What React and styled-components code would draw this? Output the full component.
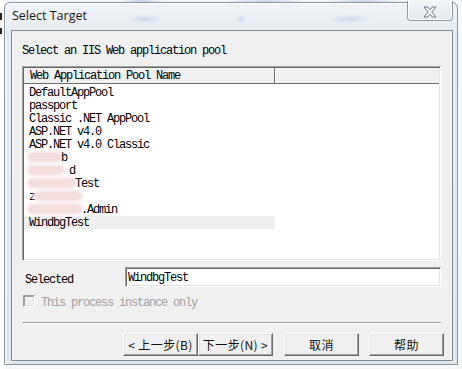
import React from 'react';
import styled, { createGlobalStyle } from 'styled-components';

const Global = createGlobalStyle`
  html, body { margin: 0; padding: 0; background: #fbfbfb; }
  body { width: 462px; height: 369px; overflow: hidden; }
  * { box-sizing: border-box; }
`;

const Page = styled.div`
  display: flex;
  width: 462px;
  height: 369px;
  padding-top: 2px;
  background:
    radial-gradient(ellipse 22px 3px at 142px 1px, rgba(90, 130, 210, 0.35), transparent),
    radial-gradient(ellipse 40px 3px at 265px 1px, rgba(90, 130, 210, 0.3), transparent),
    radial-gradient(ellipse 40px 3px at 365px 1px, rgba(90, 130, 210, 0.3), transparent),
    #f6f7f8;
`;

const LeftStrip = styled.div`
  width: 4px;
  flex: none;
  margin-top: -2px;
  background:
    linear-gradient(#222, #222) 0 13px / 2px 7px no-repeat,
    linear-gradient(#222, #222) 0 28px / 2px 6px no-repeat,
    #fff;
`;

const Window = styled.div`
  width: 454px;
  height: 363px;
  flex: none;
  display: flex;
  flex-direction: column;
  border: 1px solid #8a949e;
  border-radius: 6px 6px 0 0;
  background:
    radial-gradient(ellipse 18px 4px at 140px 16px, rgba(110, 150, 220, 0.28), transparent),
    radial-gradient(ellipse 6px 4px at 236px 16px, rgba(110, 150, 220, 0.22), transparent),
    radial-gradient(ellipse 22px 4px at 345px 16px, rgba(110, 150, 220, 0.25), transparent),
    linear-gradient(#f1f4f7, #e6ebf0 30px, #e3e8ed);
  box-shadow: inset 1px 1px 0 rgba(255, 255, 255, 0.8);
`;

const TitleBar = styled.div`
  height: 27px;
  flex: none;
  display: flex;
  align-items: flex-start;
  padding-left: 7px;
  padding-right: 4px;
`;

const TitleText = styled.div`
  font-family: "Open Sans", "Liberation Sans", sans-serif;
  font-size: 12.5px;
  line-height: 16px;
  padding-top: 5px;
  color: #1a1a1a;
`;

const CloseButton = styled.div`
  margin-left: auto;
  margin-top: -2px;
  width: 46px;
  height: 20px;
  border: 1px solid #8f99a3;
  border-top: none;
  border-radius: 0 0 4px 4px;
  background: linear-gradient(#f2f5f8, #e4e9ee);
  box-shadow: inset 1px 0 0 #fff, inset -1px -1px 0 #fff;
  display: flex;
  align-items: center;
  justify-content: center;
  padding-top: 2px;
`;

const Client = styled.div`
  margin: 0 4px 3px 6px;
  height: 331px;
  border: 1px solid #838c95;
  background: #f0f0f0;
  padding: 0 11px 0 10px;
  display: flex;
  flex-direction: column;
  font-family: "Liberation Mono", monospace;
  font-size: 12px;
  letter-spacing: -1.2px;
  color: #000;
`;

const Heading = styled.div`
  margin-top: 14px;
  height: 13px;
  line-height: 13px;
`;

const ListBox = styled.div`
  margin-top: 8px;
  height: 195px;
  width: 419px;
  border-style: solid;
  border-width: 1px;
  border-color: #a0a0a0 #fff #fff #a0a0a0;
  box-shadow: inset 1px 1px 0 #696969, inset -1px -1px 0 #e3e3e3;
  background: #fff;
  padding: 1px;
  overflow: hidden;
`;

const Header = styled.div`
  display: flex;
  height: 16px;
  background: #f0f0f0;
  border-bottom: 1px solid #6e6e6e;
`;

const HeaderCell = styled.div`
  width: ${(p) => p.$w || 'auto'};
  flex: ${(p) => (p.$w ? 'none' : '1')};
  line-height: 17px;
  padding-left: 6px;
  border-right: ${(p) => (p.$w ? '1px solid #6e6e6e' : 'none')};
  box-shadow: ${(p) => (p.$w ? '1px 0 0 #fff' : 'none')};
  white-space: nowrap;
`;

const Rows = styled.div`
  padding-top: 2px;
`;

const Row = styled.div`
  width: 251px;
  height: 13px;
  line-height: 14px;
  padding-left: 5px;
  white-space: nowrap;
  background: ${(p) => (p.$selected ? '#efefef' : 'transparent')};
`;

const Redact = styled.span`
  display: inline-block;
  width: ${(p) => p.$w}px;
  height: 8px;
  vertical-align: 0;
  border-radius: 4px;
  background: #f5dede;
  box-shadow: 0 0 3px 2px #f8e8e8;
`;

const SelectedRow = styled.div`
  margin-top: 6px;
  height: 20px;
  display: flex;
  align-items: center;
`;

const Label = styled.div`
  width: 103px;
  padding-left: 3px;
  padding-top: 5px;
`;

const TextBox = styled.div`
  flex: 1;
  height: 20px;
  border-style: solid;
  border-width: 1px;
  border-color: #a0a0a0 #fff #fff #a0a0a0;
  box-shadow: inset 1px 1px 0 #696969, inset -1px -1px 0 #e3e3e3;
  background: #fff;
  padding-left: 2px;
  line-height: 20px;
`;

const CheckRow = styled.div`
  margin-top: 8px;
  height: 12px;
  display: flex;
  align-items: center;
  gap: 6px;
  color: #a0a0a0;
`;

const CheckText = styled.span`
  padding-top: 3px;
`;

const CheckBox = styled.div`
  margin-left: 1px;
  width: 12px;
  height: 12px;
  flex: none;
  border-style: solid;
  border-width: 1px;
  border-color: #a0a0a0 #fff #fff #a0a0a0;
  box-shadow: inset 1px 1px 0 #a0a0a0, inset -1px -1px 0 #e3e3e3;
  background: #f0f0f0;
`;

const Separator = styled.div`
  margin-top: 15px;
  height: 2px;
  border-top: 1px solid #a0a0a0;
  border-bottom: 1px solid #fff;
`;

const ButtonRow = styled.div`
  margin-top: 9px;
  margin-right: -3px;
  display: flex;
  justify-content: flex-end;
`;

const Button = styled.div`
  width: 75px;
  height: 23px;
  margin-left: ${(p) => p.$gap || 0}px;
  background: #f0f0f0;
  border-style: solid;
  border-width: 1px;
  border-color: #fff #696969 #696969 #fff;
  box-shadow: inset -1px -1px 0 #a0a0a0, inset 1px 1px 0 #e3e3e3;
  display: flex;
  align-items: center;
  justify-content: center;
  font-family: "Noto Sans CJK SC", "Liberation Sans", sans-serif;
  font-size: 12px;
  letter-spacing: 0.4px;
  color: #111;
  white-space: nowrap;
`;

const CloseIcon = () => (
  <svg width="14" height="12" viewBox="0 0 14 12">
    <path
      d="M1 1 H4.6 L7 3.8 L9.4 1 H13 L8.8 6 L13 11 H9.4 L7 8.2 L4.6 11 H1 L5.2 6 Z"
      fill="#fdfdfd"
      stroke="#6b7580"
      strokeWidth="1"
      strokeLinejoin="round"
    />
  </svg>
);

export default function App() {
  return (
    <>
      <Global />
      <Page>
        <LeftStrip />
        <Window>
          <TitleBar>
            <TitleText>Select Target</TitleText>
            <CloseButton>
              <CloseIcon />
            </CloseButton>
          </TitleBar>
          <Client>
            <Heading>Select an IIS Web application pool</Heading>
            <ListBox>
              <Header>
                <HeaderCell $w="251px">Web Application Pool Name</HeaderCell>
                <HeaderCell />
              </Header>
              <Rows>
                <Row>DefaultAppPool</Row>
                <Row>passport</Row>
                <Row>Classic .NET AppPool</Row>
                <Row>ASP.NET v4.0</Row>
                <Row>ASP.NET v4.0 Classic</Row>
                <Row><Redact $w={32} />b</Row>
                <Row><Redact $w={34} /> d</Row>
                <Row><Redact $w={46} />Test</Row>
                <Row>z<Redact $w={46} /></Row>
                <Row><Redact $w={52} />.Admin</Row>
                <Row $selected>WindbgTest</Row>
              </Rows>
            </ListBox>
            <SelectedRow>
              <Label>Selected</Label>
              <TextBox>WindbgTest</TextBox>
            </SelectedRow>
            <CheckRow>
              <CheckBox />
              <CheckText>This process instance only</CheckText>
            </CheckRow>
            <Separator />
            <ButtonRow>
              <Button>&lt; 上一步(B)</Button>
              <Button>下一步(N) &gt;</Button>
              <Button $gap={11}>取消</Button>
              <Button $gap={10}>帮助</Button>
            </ButtonRow>
          </Client>
        </Window>
      </Page>
    </>
  );
}
